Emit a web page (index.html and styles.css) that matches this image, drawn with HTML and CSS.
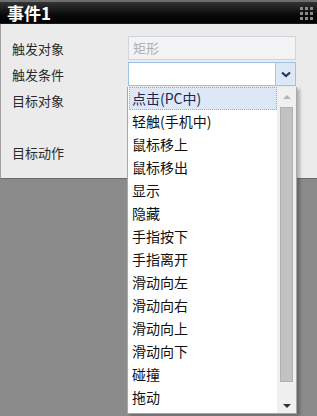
FILE: index.html
```html
<!DOCTYPE html>
<html lang="zh">
<head>
<meta charset="utf-8">
<link rel="stylesheet" href="styles.css">
</head>
<body>
<div class="strip"></div>
<div class="header">
  <span class="title">事件1</span>
  <svg class="grip" width="15" height="14" viewBox="0 0 15 14">
    <g fill="#8a8a8a">
      <rect x="0" y="0" width="3" height="3"/><rect x="5" y="0" width="3" height="3"/><rect x="10" y="0" width="3" height="3"/>
      <rect x="0" y="5" width="3" height="3"/><rect x="5" y="5" width="3" height="3"/><rect x="10" y="5" width="3" height="3"/>
      <rect x="0" y="10" width="3" height="3"/><rect x="5" y="10" width="3" height="3"/><rect x="10" y="10" width="3" height="3"/>
    </g>
  </svg>
</div>
<div class="panel">
  <div class="row">
    <span class="label">触发对象</span>
    <div class="input disabled">矩形</div>
  </div>
  <div class="row">
    <span class="label">触发条件</span>
    <div class="input select">
      <span class="value"></span>
      <span class="btn">
        <svg width="10" height="7" viewBox="0 0 10 7"><path d="M1 1.5 L5 5 L9 1.5" fill="none" stroke="#22346a" stroke-width="2.2"/></svg>
      </span>
    </div>
  </div>
  <div class="row">
    <span class="label">目标对象</span>
  </div>
  <div class="row tall">
    <span class="label">目标动作</span>
  </div>
</div>
<div class="menu">
  <ul class="items">
    <li class="item active">点击(PC中)</li>
    <li class="item">轻触(手机中)</li>
    <li class="item">鼠标移上</li>
    <li class="item">鼠标移出</li>
    <li class="item">显示</li>
    <li class="item">隐藏</li>
    <li class="item">手指按下</li>
    <li class="item">手指离开</li>
    <li class="item">滑动向左</li>
    <li class="item">滑动向右</li>
    <li class="item">滑动向上</li>
    <li class="item">滑动向下</li>
    <li class="item">碰撞</li>
    <li class="item">拖动</li>
  </ul>
  <div class="scrollbar">
    <div class="arrow up"></div>
    <div class="thumb"></div>
    <div class="arrow down"></div>
  </div>
</div>
</body>
</html>
```
FILE: styles.css
```css
html, body {
  margin: 0;
  padding: 0;
}
body {
  width: 317px;
  height: 416px;
  overflow: hidden;
  background: #8b8b8b;
  font-family: "Noto Sans CJK SC", "Noto Sans", sans-serif;
  position: relative;
}
.strip {
  height: 2px;
  background: #6e6e6e;
}
.header {
  height: 22px;
  background: linear-gradient(#333333, #0a0a0a 60%, #000000);
  display: flex;
  align-items: center;
  justify-content: space-between;
  padding: 0 2px 0 7px;
  border-bottom: 1px solid #1a1a1a;
  box-sizing: border-box;
}
.title {
  color: #ffffff;
  font-weight: bold;
  font-size: 17px;
  line-height: 22px;
}
.grip {
  display: block;
  margin-top: 3px;
}
.panel {
  height: 155px;
  box-sizing: border-box;
  background: #ebebeb;
  border-left: 1px solid #a0a0a0;
  border-bottom: 1px solid #6a6a6a;
  padding: 12px 21px 0 11px;
  display: flex;
  flex-direction: column;
  gap: 2px;
}
.row {
  display: flex;
  align-items: center;
  height: 24px;
}
.row.tall {
  height: 24px;
  margin-top: 26px;
}
.label {
  width: 116px;
  font-size: 13px;
  color: #2a2a2a;
}
.input {
  flex: 1;
  height: 24px;
  box-sizing: border-box;
  border: 1px solid #cdd6de;
  background: #f3f3f3;
  font-size: 13px;
  line-height: 22px;
  padding-left: 4px;
  color: #b0b0b0;
}
.input.select {
  display: flex;
  padding: 0;
  background: #ffffff;
  border-color: #9fc1e4;
}
.value {
  flex: 1;
}
.btn {
  width: 19px;
  background: #dce8f6;
  border-left: 1px solid #a8c6e6;
  display: flex;
  align-items: center;
  justify-content: center;
}
.btn svg {
  display: block;
}
.menu {
  position: absolute;
  left: 127px;
  top: 87px;
  width: 170px;
  height: 327px;
  box-sizing: border-box;
  background: #ffffff;
  border: 1px solid #a8a8a8;
  border-top: none;
  box-shadow: 3px 2px 3px rgba(0, 0, 0, 0.25);
  display: flex;
}
.items {
  list-style: none;
  margin: 0;
  padding: 0 0 0 1px;
  flex: 1;
}
.item {
  height: 23px;
  line-height: 23px;
  font-size: 14px;
  color: #111111;
  padding-left: 3px;
  box-sizing: border-box;
}
.item.active {
  background: #dde8f7;
  border: 1px dotted #8fb0de;
  line-height: 21px;
  padding-left: 2px;
  color: #1c2452;
}
.scrollbar {
  width: 19px;
  background: #f0f0f0;
  display: flex;
  flex-direction: column;
  align-items: center;
}
.arrow {
  width: 0;
  height: 0;
  border-left: 4px solid transparent;
  border-right: 4px solid transparent;
}
.arrow.up {
  border-bottom: 4px solid #b4b4b4;
  margin-top: 8px;
}
.arrow.down {
  border-top: 4px solid #333333;
  margin-top: 22px;
}
.thumb {
  width: 13px;
  height: 275px;
  margin-top: 8px;
  background: #c2c2c2;
  border: 1px solid #b0b0b0;
  box-sizing: border-box;
}
```
